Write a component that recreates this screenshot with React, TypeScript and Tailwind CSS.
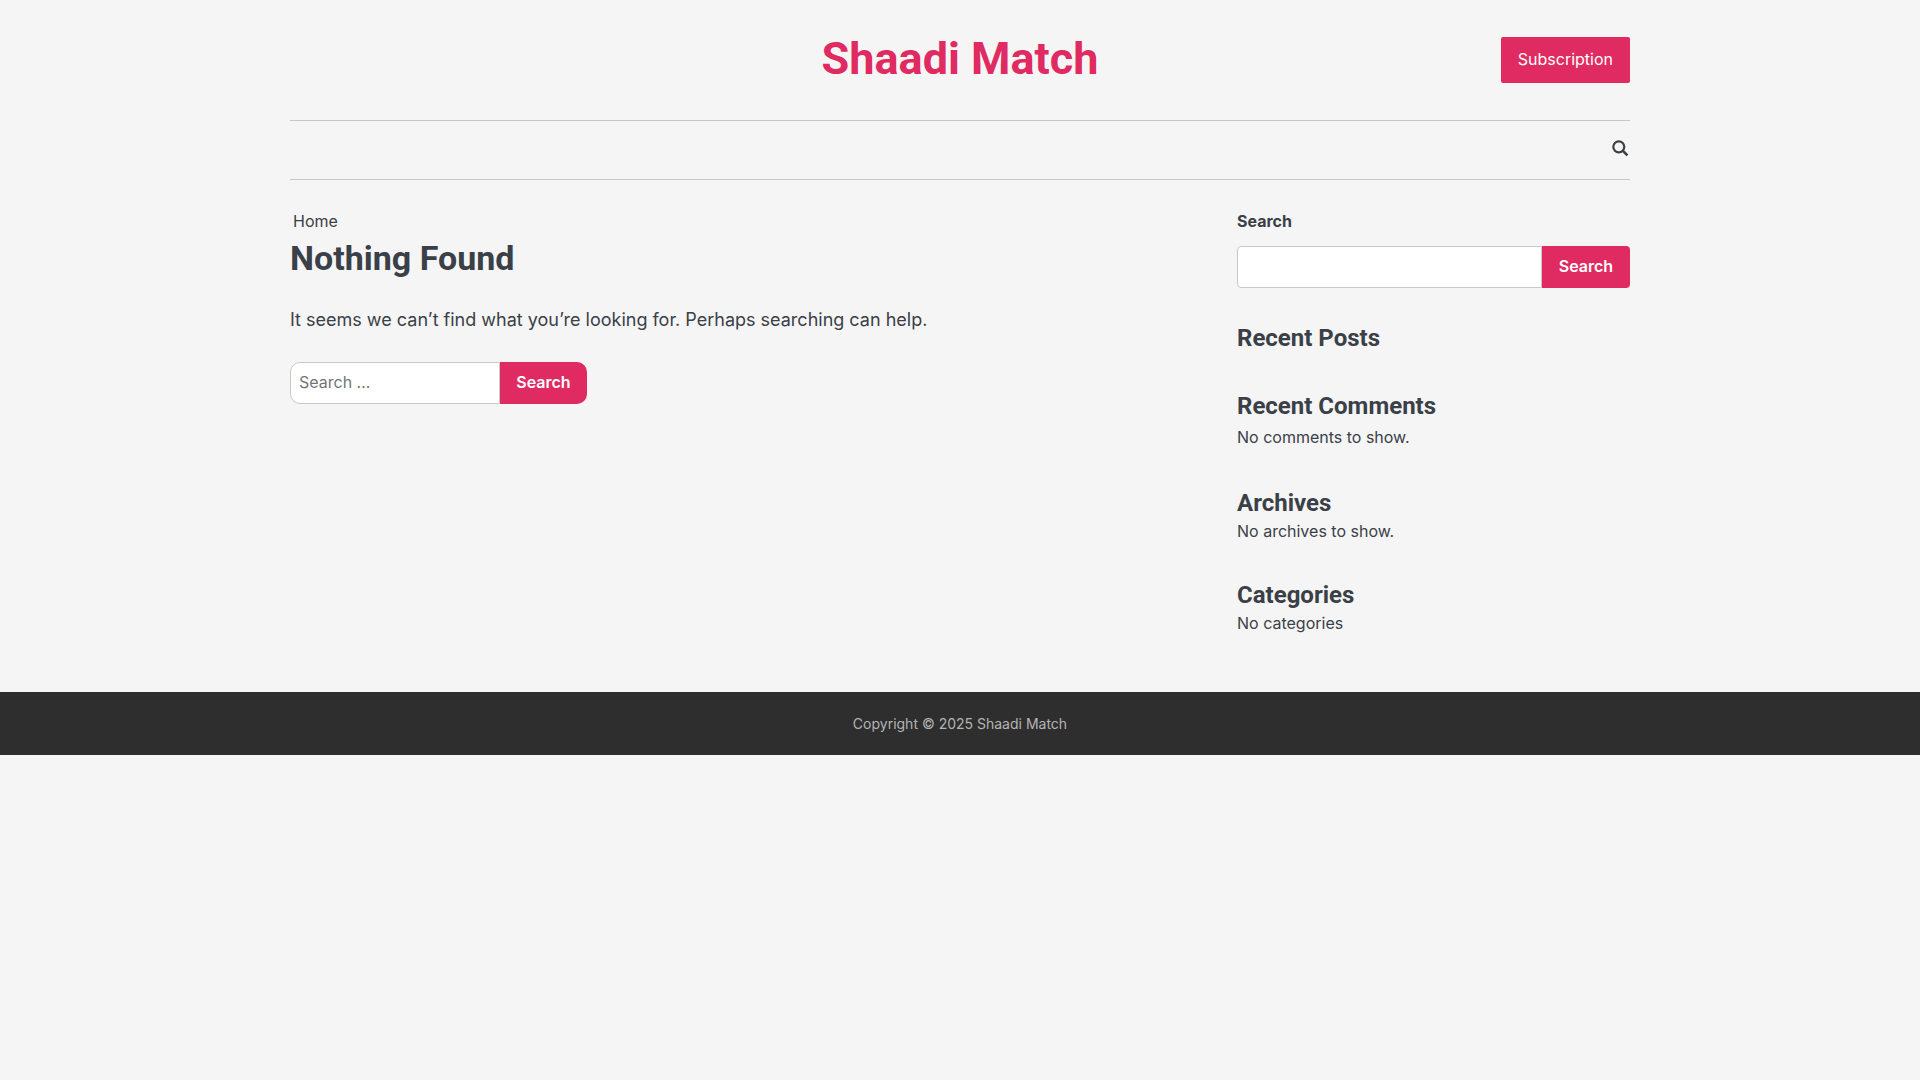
import type { ReactNode } from "react";

interface SearchFormProps {
	id: string;
	label?: string;
	placeholder?: string;
	variant: "content" | "sidebar";
}

function SearchForm({ id, label, placeholder, variant }: SearchFormProps) {
	const wide = variant === "sidebar";

	return (
		<form role="search" onSubmit={(e) => e.preventDefault()}>
			{label && (
				<label htmlFor={id} className="block mb-[11px] leading-7 font-bold">
					{label}
				</label>
			)}
			<div className="flex h-[42px]">
				<input
					id={id}
					type="search"
					aria-label={label ? undefined : "Search for:"}
					placeholder={placeholder}
					className={`min-w-0 border border-[#c8c8c8] bg-white px-2 pb-0.5 placeholder:text-[#757575] outline-none ${
						wide ? "flex-1 rounded-l" : "w-[210px] rounded-l-[10px]"
					}`}
				/>
				<button
					type="submit"
					className={`bg-[#df2b61] pb-0.5 text-white font-semibold cursor-pointer ${
						wide ? "w-[88px] rounded-r" : "w-[87px] rounded-r-[10px]"
					}`}
				>
					Search
				</button>
			</div>
		</form>
	);
}

function Widget({ title, children }: { title: string; children?: ReactNode }) {
	return (
		<section>
			<h2 className="font-[Roboto,sans-serif] text-2xl leading-8 font-bold">{title}</h2>
			{children}
		</section>
	);
}

export default function App() {
	return (
		<div className="min-h-screen bg-[#f5f5f5] text-[#3a3f48] font-[Inter,sans-serif] text-base">
			<div className="mx-auto max-w-[1340px]">
				<header>
					<div className="grid grid-cols-3 items-center h-30">
						<a
							href="#"
							className="col-start-2 mb-0.5 justify-self-center whitespace-nowrap font-[Roboto,sans-serif] text-[45px] leading-[54px] font-bold text-[#df2b61]"
						>
							Shaadi Match
						</a>
						<a
							href="#"
							className="justify-self-end rounded-[2px] bg-[#df2b61] px-[17px] pt-2.5 pb-3 leading-6 text-white"
						>
							Subscription
						</a>
					</div>
					<nav className="flex h-15 items-center justify-end border-y border-[#c8c8c8]">
						<button type="button" aria-label="Open search" className="mb-1 cursor-pointer">
							<svg width="18" height="18" viewBox="0 0 18 18" fill="none" stroke="currentColor">
								<circle cx="6.8" cy="7.8" r="5.5" strokeWidth="2.2" />
								<path d="M10.7 11.7l4.7 4.7" strokeWidth="2.6" />
							</svg>
						</button>
					</nav>
				</header>

				<div className="flex justify-between gap-8 pt-[27px]">
					<main className="flex-1">
						<nav aria-label="Breadcrumbs" className="pl-[3px] leading-7">
							<a href="#">Home</a>
						</nav>
						<h1 className="mt-[3px] font-[Roboto,sans-serif] text-[34px] leading-10 font-bold">
							Nothing Found
						</h1>
						<p className="my-[27px] text-lg leading-[30px]">
							It seems we can’t find what you’re looking for. Perhaps searching can help.
						</p>
						<SearchForm id="content-search" placeholder="Search …" variant="content" />
					</main>

					<aside className="w-[393px] shrink-0 pb-[57px]">
						<SearchForm id="sidebar-search" label="Search" variant="sidebar" />
						<div className="mt-[34px] flex flex-col gap-9">
							<Widget title="Recent Posts" />
							<Widget title="Recent Comments">
								<p className="mt-[3px] mb-0.5 leading-6">No comments to show.</p>
							</Widget>
							<Widget title="Archives">
								<p className="leading-6">No archives to show.</p>
							</Widget>
							<Widget title="Categories">
								<p className="leading-6">No categories</p>
							</Widget>
						</div>
					</aside>
				</div>
			</div>

			<footer className="bg-[#2e2e2e] py-5 text-center text-sm leading-[23px] text-[#b4b4b4]">
				Copyright © 2025 Shaadi Match
			</footer>
		</div>
	);
}
